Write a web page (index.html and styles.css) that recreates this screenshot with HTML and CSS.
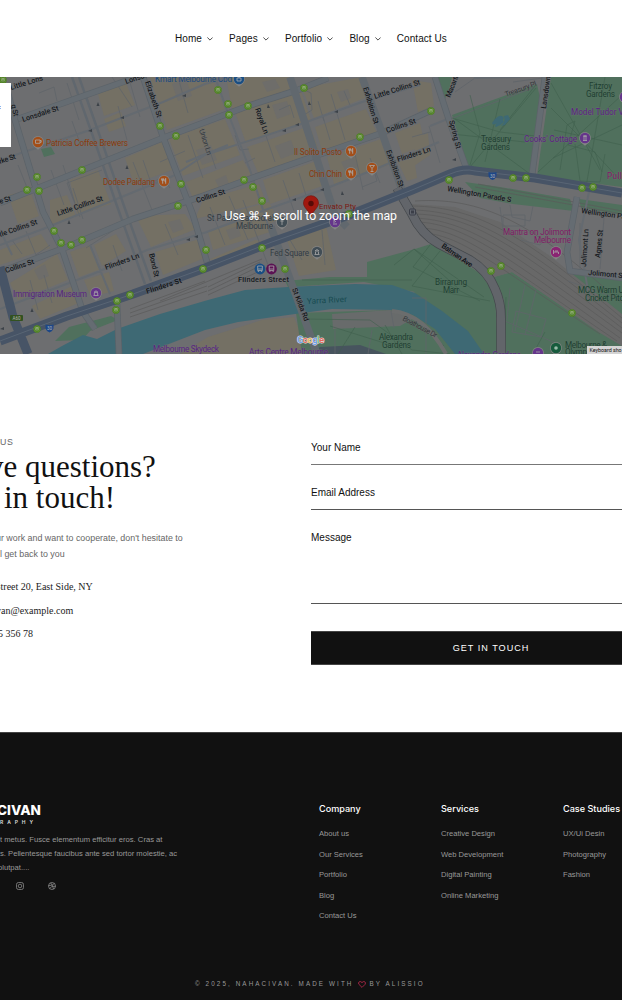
FILE: index.html
```html
<!DOCTYPE html>
<html lang="en">
<head>
<meta charset="utf-8">
<title>Nahacivan – Contact</title>
<link rel="stylesheet" href="styles.css">
</head>
<body>
<header class="header">
  <nav class="nav">
    <a>Home <svg class="chev" viewBox="0 0 6 4"><path d="M.4.5 3 3.1 5.6.5"/></svg></a>
    <a>Pages <svg class="chev" viewBox="0 0 6 4"><path d="M.4.5 3 3.1 5.6.5"/></svg></a>
    <a>Portfolio <svg class="chev" viewBox="0 0 6 4"><path d="M.4.5 3 3.1 5.6.5"/></svg></a>
    <a>Blog <svg class="chev" viewBox="0 0 6 4"><path d="M.4.5 3 3.1 5.6.5"/></svg></a>
    <a>Contact Us</a>
  </nav>
</header>
<section class="map">
<svg class="map-art" viewBox="0 77 622 277">
  <defs>
    <g id="stop"><circle r="3.7" fill="#3f7a1b"/><circle r="3.1" fill="none" stroke="#71953c" stroke-width=".7"/><rect x="-1.6" y="-1.9" width="3.2" height="3.5" rx=".6" fill="#a6b68c"/><path d="M-1-.9H1M-1 .6H1M-1.2 2.2-.7 1.6M1.2 2.2.7 1.6" stroke="#3f7a1b" stroke-width=".6"/></g>
    <g id="pin"><path d="M-5.3 1.5Q-4 5 0 7.7 4 5 5.3 1.5" fill="#858585"/><circle r="5.9" fill="#858585"/><circle r="5.2"/></g>
    <g id="fork" fill="none" stroke="#aaa" stroke-width=".9"><path d="M-1.3-2.6V2.7M-2.3-2.6V-.7H-.4V-2.6M1.7 2.7V-2.6Q.7-1.6.8.3H1.7"/></g>
  </defs>
  <rect y="77" width="622" height="277" fill="#6d6e70"/>
  <g class="block">
    <path d="M98 94 126 83 135 105 104 116ZM104 119 121 112 126 126 109 132ZM150 77H212L225 109 167 130ZM169 139 225 119 240 155 183 176ZM226 77H289L297 87 232 109ZM235 112 301 91 311 120 246 143ZM302 88 362 77 365 98 314 118ZM315 127 366 109 377 133 322 151ZM247 147 310 126 319 151 258 173ZM125 158 162 142 172 170 134 184ZM186 182 243 160 252 176 193 198ZM263 180 319 160 328 184 270 204ZM327 157 381 139 392 164 334 184ZM395 133 420 123 425 145 402 154ZM412 80 431 83 434 106 418 112ZM70 180 98 170 111 204 77 215ZM50 200 67 195 76 216 50 226ZM8 195 30 190 39 216 18 224ZM0 250 41 234 50 248 0 265ZM10 283 57 254 68 280 18 300ZM70 252 90 245 101 269 79 277ZM136 216 185 214 196 229 151 247ZM94 245 116 234 126 251 102 266ZM195 219 203 200 259 184 266 202ZM208 232 264 213 270 232 213 250ZM155 252 203 238 207 257 163 275ZM32 306 74 285 81 302 40 319ZM208 260 255 240 263 241 216 259ZM240 210 269 202 278 220 247 233ZM287 240 326 226 336 270 299 276ZM208 337 262 320 294 317 309 354H180ZM415 138 428 133 430 155 414 166ZM398 162 414 158 417 178 407 181ZM84 280 109 272 114 291 91 297Z"/>
    <path class="gap" d="M172 84 186 79 192 96 178 101ZM196 150 211 145 217 160 202 165ZM262 82 275 79 280 88 267 92ZM272 105 287 101 291 114 277 119ZM337 92 348 89 351 98 341 102ZM275 146 291 140 296 153 281 159ZM341 162 354 157 358 167 346 172ZM215 180 226 175 229 184 219 188ZM34 270 45 264 49 276 39 280ZM168 222 180 219 184 229 173 233ZM226 230 238 226 241 236 230 240Z"/>
  </g>
  <g fill="#50705d">
    <path d="M452 115 537 84 540 98 531 175 468 167ZM551 77H622V187L537 176ZM436 77H452L449 90 445 99Z"/>
    <path d="M465 182 500 187 570 199 574 211 513 204 480 198ZM579 199 622 205V215L581 208Z"/>
    <path d="M285 281 330 277 367 277V262L415 249 434 243 481 274 495 295 498 354H302L296 313 390 310 415 292 364 282 288 287ZM494 277 512 272 612 339 622 342V354H506L504 300Z"/>
    <path d="M568 270 622 277V325L580 291ZM41 149 51 147 55 154 44 157ZM55 341 69 327 111 316 118 320 90 331 82 340Z"/>
  </g>
  <path class="water" d="M48 354 62 346 83 335 97 339 117 329 160 314 208 300 245 290 288 287 355 284 392 285 415 293 442 311 468 331 484 354H455L435 329 413 315 392 310 332 309 295 314 238 322 205 330 143 354Z"/>
  <path d="M332 314 390 310 414 318 400 326 333 329Z" fill="#686b6b"/>
  <path d="M320 347 360 345 386 354H312Z" fill="#47545e"/>
  <path class="rail-bed" d="M412 204 455 207 500 222 550 256 622 314V346L600 333 512 272 494 277 470 263 428 238Z"/>
  <g class="rails">
    <path d="M412 206C480 207 525 237 622 318M412 210C474 211 520 242 622 323M412 214C472 214 515 246 622 328M414 218C470 220 510 252 622 333M416 222C464 223 507 257 620 338M420 228C464 229 500 262 617 341M424 233C464 236 496 267 600 334M415 201C490 196 540 231 622 303M208 287 260 262M208 291 260 266M208 295 262 270M160 301 262 259M130 309 205 281M130 313 207 286M130 317 207 291M478 184 622 211M475 187 622 214"/>
  </g>
  <g class="lanes">
    <path d="M67 83 79 120M112 77 132 107M129 79 140 117M39 93 54 87 57 101M72 121 80 143M85 92 98 130M118 106 127 140M178 77 188 113M188 135 203 178M202 128 216 169M235 135 240 150 249 149M245 163 255 158M265 133 275 162M279 110 290 105 294 118M300 88 311 93 312 110 304 115M318 101 324 121M331 94 345 140M344 91 350 105M370 158 380 183M355 154 363 190M362 187 377 181 372 163M283 180 294 211M299 173 309 205M51 170 64 205M63 165 75 203M26 231 36 255 50 245M12 240 22 254M86 248 114 230M151 183 163 177 170 188M143 160 151 183M160 162 185 151M80 217 67 183 102 170M133 162 152 210M165 224 178 255M113 245 122 271M30 280 38 310M44 275 52 303M73 188 83 219M18 165 30 195M210 207 225 245M229 196 248 240M243 200 270 270M290 240 302 260M322 230 325 265M330 140 323 117M429 126 440 163M455 92 475 78M412 137 430 132M513 82 550 77M453 118 536 87M500 207 503 230M510 205 512 217 530 221 533 206M580 223V269M604 218 600 269M503 215H525V226H503ZM521 240 540 245 551 229M426 354V298H412M335 330V354M372 330 368 354M391 311 394 328M510 288 507 320M516 311 546 319 541 337 512 332ZM525 285 515 331M536 290 525 335M498 318 560 345M568 281 622 300"/>
    <path class="path" d="M452 118 500 132 535 136M452 134 525 142M470 95 480 133 470 165M500 99 485 162M536 88 470 167M455 119 530 174M500 130 535 86M551 108 583 140 620 180M622 95 538 172M551 83 600 170M605 77 586 187M553 158 622 125M554 130 622 145M560 170 567 125 575 121 568 145 595 152 602 172M575 144 580 181 600 182 605 154M430 245 413 267 480 301M440 251 412 286 490 301M414 249 460 290M394 265 414 249 484 297M302 280 412 280M305 319 370 320 412 350 450 354M330 326 400 348M355 327 338 354M385 325 402 354M418 319 444 346M506 297 504 350M545 332 535 350"/>
  </g>
  <g class="minor">
    <path d="M0 160 90 130 163 102 205 84 230 77M0 245 43 229 173 176 205 155 298 125 362 102 420 85M0 309 93 274 147 250 207 232 265 210 322 190 378 168 439 142M215 77 228 113 250 170 268 225M90 245 110 294M186 162 228 145M0 230 12 255M430 126 450 118M474 78 520 77M590 187 579 240 588 290M268 225 278 245"/>
  </g>
  <g class="double"><path d="M72 77 96 145 117 206 145 284M79 77 103 145 124 206 151 281"/></g>
  <g class="road-edge"><path d="M18 119 143 75M0 203 43 186 163 138 248 106 298 90 328 78M0 272 67 247 133 219 200 197 255 177 318 155 382 133 432 110M8 93 15 120 43 212 62 249 83 312 95 329M143 77 163 137 193 215 207 262M435 77 449 120 467 170M545 77 532 175M117 304 119 354M577 197 567 252 570 271 622 278"/></g>
  <g class="road"><path d="M18 119 143 75M0 203 43 186 163 138 248 106 298 90 328 78M0 272 67 247 133 219 200 197 255 177 318 155 382 133 432 110M8 93 15 120 43 212 62 249 83 312 95 329M143 77 163 137 193 215 207 262M435 77 449 120 467 170M545 77 532 175M117 304 119 354M577 197 567 252 570 271 622 278"/></g>
  <g class="avenue"><path d="M290 77 335 215 347 227M362 77 382 133 402 190M271 227 302 312 317 354"/></g>
  <path class="batman-edge" d="M397 188 412 214Q421 234 439 244L470 260Q488 271 495 289 501 302 501 318V354"/>
  <path class="batman" d="M397 188 412 214Q421 234 439 244L470 260Q488 271 495 289 501 302 501 318V354"/>
  <path class="boathouse" d="M392 311Q424 314 446 354"/>
  <path class="hwy" d="M0 341 67 316 133 294 205 268 272 242 352 214 412 190 450 174Q464 168 475 171L535 178 622 193M0 267 13 317 28 354"/>
  <path class="hwy-line" d="M0 341 67 316 133 294 205 268 272 242 352 214 412 190 450 174Q464 168 475 171L535 178 622 193"/>
  <path d="M495 119q6-6 9-1-2 2 0 4-4 4-8 5-2-1 1-4-4 3-5 0ZM504 116l4-1 2 4-5 6-4 1q5-4 3-10" fill="#3e6974"/>
  <g fill="#3c4248"><path d="m98 102 1.500 4h-3zM120 118l4-2v3zM182 96l4-2v3zM88 131l4-2v3zM268 104l2 4h-3zM334 112l4-2v3zM282 131l4-2v3zM309 101l2 4h-3zM295 125l4-2v3zM292 200l4-2v3zM320 190l4-2v3zM342 191l2 4h-3zM127 165l1.500 4h-3zM69 220l1.500 4h-3zM32 308l1.500 4h-3zM186 240l4-2v3zM194 237l4-2v3zM0 329l4-2v3zM452 160l4-2v3z"/></g>

  <g class="lbl street">
    <text x="11" y="90" transform="rotate(-17 11 90)" textLength="34">Little Lons</text>
    <text x="23" y="122" transform="rotate(-18 23 122)" textLength="38">Lonsdale St</text>
    <text x="126" y="84" transform="rotate(-18 126 84)" textLength="38">Lonsdale St</text>
    <text x="145" y="82" transform="rotate(71 145 82)" textLength="38">Elizabeth St</text>
    <text x="11" y="105" transform="rotate(76 11 105)" textLength="12">g St</text>
    <text x="0" y="164" transform="rotate(-19 0 164)" textLength="17">rke St</text>
    <text x="0" y="204" transform="rotate(-17 0 204)" textLength="12">e St</text>
    <text x="58" y="216" transform="rotate(-19 58 216)" textLength="48">Little Collins St</text>
    <text x="0" y="237" transform="rotate(-19 0 237)" textLength="40">tle Collins St</text>
    <text x="6" y="273" transform="rotate(-18 6 273)" textLength="30">Collins St</text>
    <text x="197" y="203" transform="rotate(-18 197 203)" textLength="30">Collins St</text>
    <text x="106" y="270" transform="rotate(-20 106 270)" textLength="36">Flinders Ln</text>
    <text x="149" y="254" transform="rotate(77 149 254)" textLength="24">Bond St</text>
    <text class="b" x="147" y="294" transform="rotate(-18 147 294)" textLength="37">Flinders St</text>
    <text class="thin" x="199" y="130" transform="rotate(72 199 130)" textLength="27">Union Ln</text>
    <text x="255" y="109" transform="rotate(70 255 109)" textLength="27">Royal Ln</text>
    <text x="363" y="88" transform="rotate(73 363 88)" textLength="38">Exhibition St</text>
    <text x="386" y="151" transform="rotate(70 386 151)" textLength="39">Exhibition St</text>
    <text x="375" y="99" transform="rotate(-18 375 99)" textLength="48">Little Collins St</text>
    <text x="387" y="133" transform="rotate(-19 387 133)" textLength="31">Collins St</text>
    <text x="398" y="162" transform="rotate(-18 398 162)" textLength="35">Flinders Ln</text>
    <text x="449" y="121" transform="rotate(75 449 121)" textLength="29">Spring St</text>
    <text x="450" y="98" transform="rotate(-68 450 98)" textLength="25">Macarth</text>
    <text class="thin" x="506" y="97" transform="rotate(-20 506 97)" textLength="33">Treasury Pl</text>
    <text x="546" y="109" transform="rotate(-82 546 109)" textLength="33">Lansdown</text>
    <text x="447" y="191" transform="rotate(10 447 191)" textLength="65">Wellington Parade S</text>
    <text x="581" y="213" transform="rotate(8 581 213)" textLength="65">Wellington Parade S</text>
    <text class="b" x="441" y="247" transform="rotate(35 441 247)" textLength="36">Batman Ave</text>
    <text x="586" y="267" transform="rotate(-86 586 267)" textLength="38">Jolimont Ln</text>
    <text x="600" y="258" transform="rotate(-84 600 258)" textLength="28">Agnes St</text>
    <text x="588" y="275" transform="rotate(5 588 275)" textLength="37">Jolimont St</text>
    <text x="292" y="289" transform="rotate(69 292 289)" textLength="35">St Kilda Rd</text>
    <text class="thin" x="402" y="320" transform="rotate(28 402 320)" textLength="38">Boathouse Dr</text>
    <text x="238" y="282" textLength="51">Flinders Street</text>
  </g>
  <g class="lbl food">
    <text x="46" y="146" textLength="82">Patricia Coffee Brewers</text>
    <text x="103" y="185" textLength="52">Dodee Paidang</text>
    <text x="294" y="155" textLength="48">Il Solito Posto</text>
    <text x="309" y="177" textLength="33">Chin Chin</text>
    <text class="envato" x="319" y="209" textLength="37">Envato Pty</text>
  </g>
  <g class="lbl shop"><text x="155" y="82" textLength="77">Kmart Melbourne Cbd</text></g>
  <g class="lbl purple">
    <text x="13" y="297" textLength="74">Immigration Museum</text>
    <text x="524" y="142" textLength="53">Cooks' Cottage</text>
    <text x="571" y="115" textLength="72">Model Tudor Village</text>
    <text x="153" y="352" textLength="66">Melbourne Skydeck</text>
    <text x="249" y="355" textLength="79">Arts Centre Melbourne</text>
    <text x="457" y="358" textLength="64">Alexandra Gardens</text>
  </g>
  <g class="lbl pink"><text x="503" y="235" textLength="68">Mantra on Jolimont</text><text x="534" y="243" textLength="37">Melbourne</text><text x="607" y="179" textLength="32">Pullman</text></g>
  <g class="lbl grey"><text x="207" y="221" textLength="67">St Paul's Cathedral</text><text x="236" y="229" textLength="37">Melbourne</text><text x="270" y="256" textLength="39">Fed Square</text></g>
  <g class="lbl green">
    <text x="481" y="142" textLength="30">Treasury</text><text x="481" y="150" textLength="29">Gardens</text>
    <text x="589" y="89" textLength="23">Fitzroy</text><text x="586" y="97" textLength="29">Gardens</text>
    <text x="435" y="285" textLength="32">Birrarung</text><text x="443" y="293" textLength="16">Marr</text>
    <text x="379" y="340" textLength="34">Alexandra</text><text x="382" y="348" textLength="29">Gardens</text>
    <text x="578" y="293" textLength="50">MCG Warm Up</text><text x="585" y="301" textLength="43">Cricket Pitch</text>
    <text x="565" y="348" textLength="42">Melbourne &amp;</text><text x="565" y="355" textLength="22">Olymp</text>
  </g>
  <text class="river" x="307" y="304" transform="rotate(-3 307 304)" textLength="40">Yarra River</text>

  <use href="#stop" x="3" y="80"/><use href="#stop" x="160" y="126"/><use href="#stop" x="176" y="136"/><use href="#stop" x="37" y="177"/><use href="#stop" x="27" y="190"/><use href="#stop" x="39" y="191"/><use href="#stop" x="82" y="170"/><use href="#stop" x="181" y="184"/><use href="#stop" x="178" y="206"/><use href="#stop" x="218" y="90"/><use href="#stop" x="228" y="104"/><use href="#stop" x="229" y="115"/><use href="#stop" x="248" y="106"/><use href="#stop" x="304" y="88"/><use href="#stop" x="360" y="137"/><use href="#stop" x="244" y="180"/><use href="#stop" x="253" y="187"/><use href="#stop" x="262" y="201"/><use href="#stop" x="349" y="214"/><use href="#stop" x="431" y="111"/><use href="#stop" x="449" y="180"/><use href="#stop" x="513" y="178"/><use href="#stop" x="526" y="178"/><use href="#stop" x="582" y="188"/><use href="#stop" x="593" y="187"/><use href="#stop" x="54" y="231"/><use href="#stop" x="61" y="243"/><use href="#stop" x="71" y="245"/><use href="#stop" x="82" y="240"/><use href="#stop" x="206" y="250"/><use href="#stop" x="203" y="269"/><use href="#stop" x="130" y="295"/><use href="#stop" x="117" y="301"/><use href="#stop" x="116" y="310"/><use href="#stop" x="37" y="329"/><use href="#stop" x="262" y="248"/><use href="#stop" x="285" y="269"/><use href="#stop" x="491" y="271"/><use href="#stop" x="501" y="266"/><use href="#stop" x="572" y="313"/>
  <g fill="#a34e18"><use href="#pin" x="38" y="142"/><use href="#pin" x="164" y="181"/><use href="#pin" x="351" y="151"/><use href="#pin" x="351" y="173"/><use href="#pin" x="372" y="168"/></g>
  <use href="#fork" x="164" y="181"/><use href="#fork" x="351" y="151"/><use href="#fork" x="351" y="173"/>
  <g class="glyph"><path d="M35.5 140h4.5v3.3h-4.5zM40 140.5h1.2v1.8H40M369.5 165.5h5L372 168.5zM372 168.5v3M370.5 171.5h3"/></g>
  <use href="#pin" x="239" y="79" fill="#194e83"/><path class="glyph" d="M237 78h4v3h-4zM238 78q1-3 2 0"/>
  <g fill="#65358b"><use href="#pin" x="96" y="293"/><use href="#pin" x="585" y="138"/><use href="#pin" x="335" y="222"/><use href="#pin" x="538" y="353"/><use href="#pin" x="625" y="97"/></g>
  <path class="glyph" d="M93.5 295.5h5M94 292.3l2-1.5 2 1.5zM94.3 293v2M97.7 293v2M583 140.5h4M584 140v-4h2v4M583 136h4M333 224h4M334 223v-3l2 2M536 352h4"/>
  <use href="#pin" x="556" y="252" fill="#8a2472"/><path class="glyph" d="M553.5 250v4M558.5 254v-2h-5M555 251h3"/>
  <g fill="#414d55"><use href="#pin" x="317" y="252"/><use href="#pin" x="282" y="222"/></g><path class="glyph" d="M314.5 254.5h5M315 251l2-1.5 2 1.5zM315.5 252v2M318.5 252v2M282 219v6M280.3 221h3.4"/>
  <circle cx="260" cy="269" r="5.4" fill="#194e83"/><circle cx="271.5" cy="269" r="5.4" fill="#5b1253"/><path class="glyph" d="M257.7 266h4.6v4.6h-4.6zM258 269h4M258 272l1-1.4M262 272l-1-1.4M269.2 266h4.6v4.6h-4.6zM269.5 269h4M269.5 272l1-1.4M273.5 272l-1-1.4"/>
  <use href="#pin" x="556" y="348" fill="#175b3d"/><circle cx="556" cy="348" r="1.8" fill="#9ba"/>
  <g class="shield"><path d="M45.5 324.5q4 1 8 0v4q-1 3-4 4-3-1-4-4zM488.500 172q4 1 8 0v4q-1 3-4 4-3-1-4-4z" fill="#1d4788"/><rect x="10" y="315" width="13" height="6" rx="1" fill="#335220"/><text x="49.500" y="330.300">30</text><text x="492.500" y="177.800">30</text><text x="16.500" y="320.200">A60</text><rect x="409.500" y="209" width="6" height="6" rx="1" fill="#62666e" stroke="#3b3e48"/><path d="M411 210.500h3v3h-3z" fill="#3b3e48"/></g>
  <path d="M311 217C309 210 303.500 208 303.500 203A7.500 7.300 0 0 1 318.500 203C318.500 208 313 210 311 217Z" fill="#a1180f" stroke="#771610" stroke-width=".7"/><circle cx="311" cy="203.500" r="2.700" fill="#560b07"/>
  <text class="hint" x="224.500" y="220" textLength="172.500">Use ⌘ + scroll to zoom the map</text>
  <text class="google" x="297" y="343" textLength="27"><tspan fill="#6c9cec">G</tspan><tspan fill="#e46558">o</tspan><tspan fill="#e9bd48">o</tspan><tspan fill="#6c9cec">g</tspan><tspan fill="#62b578">l</tspan><tspan fill="#e46558">e</tspan></text>
  <rect x="587" y="346" width="35" height="8" fill="#d4d4d4"/><text class="keys" x="589.500" y="352.300">Keyboard sho</text>
  <rect y="83" width="11" height="64" fill="#fff"/><path d="M0 106.500h1M0 108.500h1" stroke="#8cb5ee"/>
</svg>
</section>
<main class="contact">
  <div class="intro">
    <p class="eyebrow">US</p>
    <h1><span class="t1">ve questions?</span><span class="t2">in touch!</span></h1>
    <p class="lead"><span class="l1">ur work and want to cooperate, don't hesitate to</span><span class="l2">l get back to you</span></p>
    <address><span class="a1">Street 20, East Side, NY</span><span class="a2">van@example.com</span><span class="a3">5 356 78</span></address>
  </div>
  <form class="form">
    <label>Your Name</label>
    <label>Email Address</label>
    <label class="message">Message</label>
    <button type="button">GET IN TOUCH</button>
  </form>
</main>
<footer class="footer">
  <div class="footer-cols">
    <div class="about">
      <div class="logo">CIVAN</div>
      <div class="tag">RAPHY</div>
      <p><span class="f1">t metus. Fusce elementum efficitur eros. Cras at</span><span class="f2">s. Pellentesque faucibus ante sed tortor molestie, ac</span><span class="f3">olutpat....</span></p>
      <div class="social">
        <svg viewBox="0 0 8 8"><rect x=".5" y=".5" width="7" height="7" rx="2"/><circle cx="4" cy="4" r="1.800"/><path d="M5.900 1.900h.3"/></svg>
        <svg viewBox="0 0 8 8"><circle cx="4" cy="4" r="3.500"/><path d="M2.600.8Q5 3.500 5.500 7.100M.6 3.600Q4.500 3.800 6.400 1.500M1.600 6.500Q3.500 3.400 7.500 4.300"/></svg>
      </div>
    </div>
    <div class="col"><h2>Company</h2><a>About us</a><a>Our Services</a><a>Portfolio</a><a>Blog</a><a>Contact Us</a></div>
    <div class="col"><h2>Services</h2><a>Creative Design</a><a>Web Development</a><a>Digital Painting</a><a>Online Marketing</a></div>
    <div class="col last"><h2>Case Studies</h2><a>UX/Ui Desin</a><a>Photography</a><a>Fashion</a></div>
  </div>
  <p class="copy"><span>© 2025, NAHACIVAN. MADE WITH</span><svg viewBox="0 0 8 7"><path d="M4 6.400.9 3.300Q0 1.700 1.200.8 2.800 0 4 1.600 5.200 0 6.800.8 8 1.700 7.100 3.300Z"/></svg><span>BY ALISSIO</span></p>
</footer>
</body>
</html>
```
FILE: styles.css
```css
* { box-sizing: border-box; }
body { margin: 0; width: 622px; height: 1000px; overflow: hidden; background: #fff; color: #111; font-family: "Liberation Sans", Arial, sans-serif; }
p, h1, h2 { margin: 0; font-weight: 400; }

.header { height: 77px; }
.nav { display: flex; gap: 16px; padding: 32px 0 0 175px; font-size: 10px; line-height: 14px; letter-spacing: .06px; white-space: nowrap; }
.nav a { display: flex; align-items: center; gap: 5.2px; }
.chev { width: 6px; height: 4px; fill: none; stroke: #222; stroke-width: .8; }

.map { height: 277px; overflow: hidden; }
.map-art { display: block; width: 622px; height: 277px; font-family: Roboto, sans-serif; }
.map-art path { stroke-linejoin: round; }
.block { fill: #747064; }
.gap { fill: #6e6d6a; }
.water { fill: #3e6974; }
.rail-bed { fill: #686868; }
.rails { fill: none; stroke: #5a5a5a; stroke-width: .7; }
.lanes { fill: none; stroke: #60656a; stroke-width: .8; }
.path { stroke: #40604d; stroke-width: .6; }
.minor { fill: none; stroke: #646a70; stroke-width: 2; }
.double { fill: none; stroke: #60676e; stroke-width: 2.4; }
.road-edge { fill: none; stroke: #5c6369; stroke-width: 6.6; }
.road { fill: none; stroke: #656c72; stroke-width: 5.2; }
.avenue { fill: none; stroke: #61686e; stroke-width: 7.5; }
.batman-edge { fill: none; stroke: #45494d; stroke-width: 9.5; }
.batman { fill: none; stroke: #62656a; stroke-width: 8; }
.boathouse { fill: none; stroke: #6b6d6d; stroke-width: 4; }
.hwy { fill: none; stroke: #475466; stroke-width: 9; }
.hwy-line { fill: none; stroke: #65707d; stroke-width: .6; }
.lbl { font-size: 8.2px; paint-order: stroke; stroke: #727272; stroke-width: .8px; stroke-opacity: .6; }
.street { fill: #15191e; font-size: 7.4px; font-weight: 500; }
.street .b { font-weight: 700; }
.street .thin { fill: #33383c; font-weight: 400; }
.food { fill: #8a3a0b; }
.food .envato { fill: #791510; font-size: 7.7px; }
.shop { fill: #1c4a7e; }
.purple { fill: #582483; }
.pink { fill: #801a66; }
.grey { fill: #333c43; }
.green { fill: #203e31; stroke: #567562; }
.river { fill: #174950; font-size: 8.2px; }
.glyph { fill: none; stroke: #aaa; stroke-width: .8; }
.shield { font-size: 4.5px; fill: #b5b5b5; text-anchor: middle; }
.hint { font-size: 12.3px; fill: #fff; }
.google { font-size: 9.5px; font-weight: 500; paint-order: stroke; stroke: #ddd; stroke-width: 1px; }
.keys { font-size: 5.3px; fill: #111; }

.contact { display: flex; height: 378px; padding-top: 82px; white-space: nowrap; }
.intro { width: 311px; flex: none; }
.intro span { display: block; }
.eyebrow { font-size: 8.8px; line-height: 12px; letter-spacing: .7px; color: #666; }
h1 { font: 31px/31px "Liberation Serif", serif; margin-top: 3px; }
.t1 { margin-left: -12px; }
.t2 { margin-left: 4px; }
.lead { margin-top: 17px; font-size: 8.9px; line-height: 16px; color: #666; }
.l1 { margin-left: -4px; }
.l2 { margin-left: 0; }
address { margin-top: 13px; font: 10px/23.7px "Liberation Serif", serif; color: #222; }
.a1 { margin-left: -5px; }
.a2 { margin-left: -4px; }
.a3 { margin-left: -2px; }
.form { flex: 1; display: flex; flex-direction: column; font-size: 10px; color: #111; }
.form label { height: 45px; padding-top: 5px; line-height: 14px; border-bottom: 1px solid #555; }
.form label:first-child { height: 29px; border-color: #777; }
.form label:nth-child(2) { padding-top: 21px; }
.form .message { height: 94px; padding-top: 21px; }
.form button { margin-top: 27px; height: 34px; padding: 0 0 0 49px; border: 1px solid #444; border-width: 1px 0; background: #111; color: #fff; font: 9.1px "Liberation Sans", sans-serif; letter-spacing: 1px; }

.footer { height: 268px; background: #111; border-top: 1px solid #444; color: #999; white-space: nowrap; overflow: hidden; }
.footer-cols { display: flex; height: 241px; padding-top: 69px; }
.about { width: 319px; flex: none; }
.about span { display: block; }
.logo { margin-left: -3px; font: 800 13.5px/17px Inter, sans-serif; color: #fff; }
.tag { font: 600 5px/6px Inter, sans-serif; letter-spacing: 3.9px; color: #ddd; }
.about p { margin-top: 8px; font-size: 7.65px; line-height: 13.8px; }
.f1, .f2 { margin-left: 0; }
.f3 { margin-left: -2px; }
.social { display: flex; gap: 24px; margin: 8px 0 0 16px; }
.social svg { width: 8px; height: 8px; fill: none; stroke: #999; stroke-width: .7; }
.col { width: 122px; flex: none; font-size: 7.6px; }
.last { width: 59px; }
.col h2 { font: 500 9.1px/14px Inter, sans-serif; color: #fff; margin-bottom: 8px; }
.col a { display: block; line-height: 20.5px; }
.copy { display: flex; align-items: center; gap: 4px; padding-left: 195px; font-size: 6.3px; line-height: 20px; letter-spacing: 2.1px; }
.copy svg { width: 8px; height: 7px; fill: none; stroke: #c32b50; stroke-width: .8; }
```
